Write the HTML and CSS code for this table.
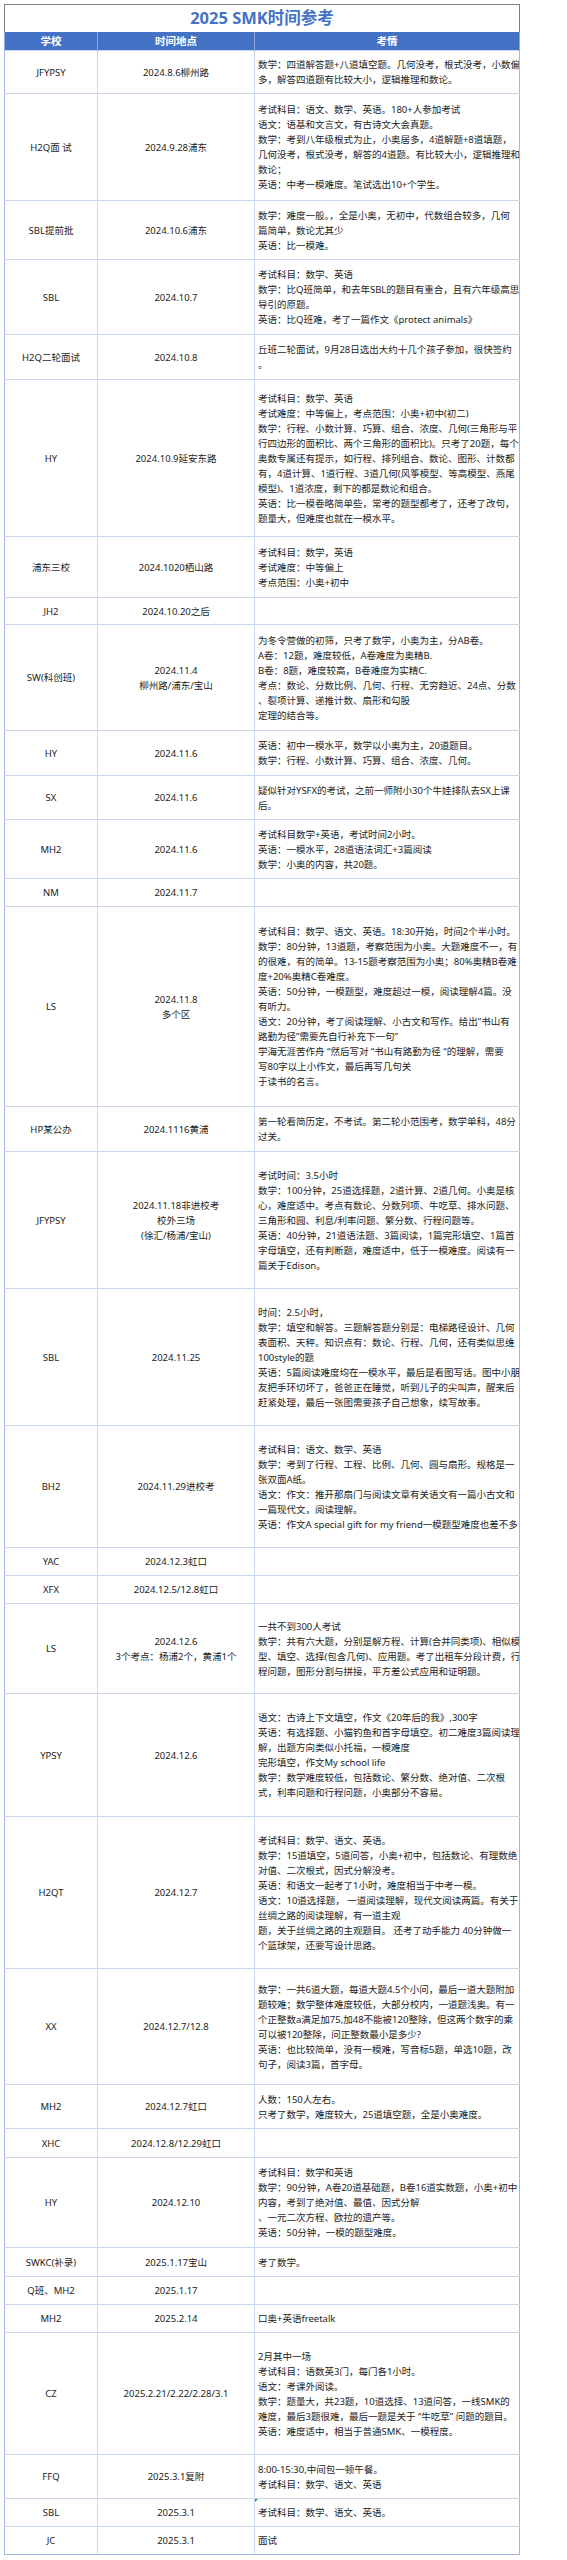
FILE: index.html
```html
<!DOCTYPE html>
<html lang="zh-CN">
<head>
<meta charset="utf-8">
<title>2025 SMK时间参考</title>
<link rel="stylesheet" href="styles.css">
</head>
<body>
<div class="page">
<table class="sheet">
<colgroup><col class="c1"><col class="c2"><col class="c3"></colgroup>
<thead>
<tr class="h27"><th class="title" colspan="3">2025 SMK时间参考</th></tr>
<tr class="h19"><th class="head">学校</th><th class="head">时间地点</th><th class="head">考情</th></tr>
</thead>
<tbody>
<tr class="h43"><td class="name">JFYPSY</td><td class="when">2024.8.6柳州路</td><td class="info">数学：四道解答题+八道填空题。几何没考，根式没考，小数偏<br>多，解答四道题有比较大小，逻辑推理和数论。</td></tr>
<tr class="h107"><td class="name">H2Q面 试</td><td class="when">2024.9.28浦东</td><td class="info">考试科目：语文、数学、英语。180+人参加考试<br>语文：语基和文言文，有古诗文大会真题。<br>数学：考到八年级根式为止，小奥居多，4道解题+8道填题，<br>几何没考，根式没考，解答的4道题。有比较大小，逻辑推理和<br>数论；<br>英语：中考一模难度。笔试选出10+个学生。</td></tr>
<tr class="h59"><td class="name">SBL提前批</td><td class="when">2024.10.6浦东</td><td class="info">数学：难度一般。，全是小奥，无初中，代数组合较多，几何<br>篇简单，数论尤其少<br>英语：比一模难。</td></tr>
<tr class="h75"><td class="name">SBL</td><td class="when">2024.10.7</td><td class="info">考试科目：数学、英语<br>数学：比Q班简单，和去年SBL的题目有重合，且有六年级高思<br>导引的原题。<br>英语：比Q班难，考了一篇作文《protect animals》</td></tr>
<tr class="h45"><td class="name">H2Q二轮面试</td><td class="when">2024.10.8</td><td class="info">丘班二轮面试，9月28日选出大约十几个孩子参加，很快签约<br>。</td></tr>
<tr class="h157"><td class="name">HY</td><td class="when">2024.10.9延安东路</td><td class="info">考试科目：数学、英语<br>考试难度：中等偏上，考点范围：小奥+初中(初二)<br>数学：行程、小数计算、巧算、组合、浓度、几何(三角形与平<br>行四边形的面积比、两个三角形的面积比)。只考了20题，每个<br>奥数专属还有提示，如行程、排列组合、数论、图形、计数都<br>有，4道计算、1道行程、3道几何(风筝模型、等高模型、燕尾<br>模型)、1道浓度，剩下的都是数论和组合。<br>英语：比一模卷略简单些，常考的题型都考了，还考了改句，<br>题量大，但难度也就在一模水平。</td></tr>
<tr class="h61"><td class="name">浦东三校</td><td class="when">2024.1020栖山路</td><td class="info">考试科目：数学，英语<br>考试难度：中等偏上<br>考点范围：小奥+初中</td></tr>
<tr class="h27"><td class="name">JH2</td><td class="when">2024.10.20之后</td><td class="info"></td></tr>
<tr class="h106"><td class="name">SW(科创班)</td><td class="when">2024.11.4<br>柳州路/浦东/宝山</td><td class="info">为冬令营做的初筛，只考了数学，小奥为主，分AB卷。<br>A卷：12题，难度较低，A卷难度为奥精B.<br>B卷：8题，难度较高，B卷难度为实精C.<br>考点：数论、分数比例、几何、行程、无穷趋近、24点、分数<br>、裂项计算、递推计数、扇形和勾股<br>定理的结合等。</td></tr>
<tr class="h45"><td class="name">HY</td><td class="when">2024.11.6</td><td class="info">英语：初中一模水平，数学以小奥为主，20道题目。<br>数学：行程、小数计算、巧算、组合、浓度、几何。</td></tr>
<tr class="h44"><td class="name">SX</td><td class="when">2024.11.6</td><td class="info">疑似针对YSFX的考试，之前一师附小30个牛娃排队去SX上课<br>后。</td></tr>
<tr class="h59"><td class="name">MH2</td><td class="when">2024.11.6</td><td class="info">考试科目数学+英语，考试时间2小时。<br>英语：一模水平，28道语法词汇+3篇阅读<br>数学：小奥的内容，共20题。</td></tr>
<tr class="h28"><td class="name">NM</td><td class="when">2024.11.7</td><td class="info"></td></tr>
<tr class="h200"><td class="name">LS</td><td class="when">2024.11.8<br>多个区</td><td class="info">考试科目：数学、语文、英语。18:30开始，时间2个半小时。<br>数学：80分钟，13道题，考察范围为小奥。大题难度不一，有<br>的很难，有的简单。13-15题考察范围为小奥；80%奥精B卷难<br>度+20%奥精C卷难度。<br>英语：50分钟，一模题型，难度超过一模，阅读理解4篇。没<br>有听力。<br>语文：20分钟，考了阅读理解、小古文和写作。给出”书山有<br>路勤为径”需要先自行补充下一句”<br>学海无涯苦作舟 “然后写对 “书山有路勤为径 “的理解，需要<br>写80字以上小作文，最后再写几句关<br>于读书的名言。</td></tr>
<tr class="h45"><td class="name">HP某公办</td><td class="when">2024.1116黄浦</td><td class="info">第一轮看简历定，不考试。第二轮小范围考，数学单科，48分<br>过关。</td></tr>
<tr class="h137"><td class="name">JFYPSY</td><td class="when">2024.11.18非进校考<br>校外三场<br>(徐汇/杨浦/宝山)</td><td class="info">考试时间：3.5小时<br>数学：100分钟，25道选择题，2道计算、2道几何。小奥是核<br>心，难度适中。考点有数论、分数列项、牛吃草、排水问题、<br>三角形和圆、利息/利率问题、繁分数、行程问题等。<br>英语：40分钟，21道语法题、3篇阅读，1篇完形填空、1篇首<br>字母填空，还有判断题，难度适中，低于一模难度。阅读有一<br>篇关于Edison。</td></tr>
<tr class="h137"><td class="name">SBL</td><td class="when">2024.11.25</td><td class="info">时间：2.5小时，<br>数学：填空和解答。三题解答题分别是：电梯路径设计、几何<br>表面积、天秤。知识点有：数论、行程、几何，还有类似思维<br>100style的题<br>英语：5篇阅读难度均在一模水平，最后是看图写话。图中小朋<br>友把手环切坏了，爸爸正在睡觉，听到儿子的尖叫声，醒来后<br>赶紧处理，最后一张图需要孩子自己想象，续写故事。</td></tr>
<tr class="h122"><td class="name">BH2</td><td class="when">2024.11.29进校考</td><td class="info">考试科目：语文、数学、英语<br>数学：考到了行程、工程、比例、几何、圆与扇形。规格是一<br>张双面A纸。<br>语文：作文：推开那扇门与阅读文章有关语文有一篇小古文和<br>一篇现代文，阅读理解。<br>英语：作文A special gift for my friend一模题型难度也差不多</td></tr>
<tr class="h28"><td class="name">YAC</td><td class="when">2024.12.3虹口</td><td class="info"></td></tr>
<tr class="h28"><td class="name">XFX</td><td class="when">2024.12.5/12.8虹口</td><td class="info"></td></tr>
<tr class="h90"><td class="name">LS</td><td class="when">2024.12.6<br>3个考点：杨浦2个，黄浦1个</td><td class="info">一共不到300人考试<br>数学：共有六大题，分别是解方程、计算(合并同类项)、相似模<br>型、填空、选择(包含几何)、应用题。考了出租车分段计费，行<br>程问题，图形分割与拼接，平方差公式应用和证明题。</td></tr>
<tr class="h123"><td class="name">YPSY</td><td class="when">2024.12.6</td><td class="info">语文：古诗上下文填空，作文《20年后的我》,300字<br>英语：有选择题、小猫钓鱼和首字母填空。初二难度3篇阅读理<br>解，出题方向类似小托福，一模难度<br>完形填空，作文My school life<br>数学：数学难度较低，包括数论、繁分数、绝对值、二次根<br>式，利率问题和行程问题，小奥部分不容易。</td></tr>
<tr class="h152"><td class="name">H2QT</td><td class="when">2024.12.7</td><td class="info">考试科目：数学、语文、英语。<br>数学：15道填空，5道问答，小奥+初中，包括数论、有理数绝<br>对值、二次根式，因式分解没考。<br>英语：和语文一起考了1小时，难度相当于中考一模。<br>语文：10道选择题， 一道阅读理解，现代文阅读两篇。有关于<br>丝绸之路的阅读理解，有一道主观<br>题，关于丝绸之路的主观题目。 还考了动手能力 40分钟做一<br>个篮球架，还要写设计思路。</td></tr>
<tr class="h116"><td class="name">XX</td><td class="when">2024.12.7/12.8</td><td class="info">数学：一共6道大题，每道大题4.5个小问，最后一道大题附加<br>题较难；数学整体难度较低，大部分校内，一道题浅奥。有一<br>个正整数a满足加75,加48不能被120整除，但这两个数字的乘<br>可以被120整除，问正整数最小是多少?<br>英语：也比较简单，没有一模难，写音标5题，单选10题，改<br>句子，阅读3篇，首字母。</td></tr>
<tr class="h44"><td class="name">MH2</td><td class="when">2024.12.7虹口</td><td class="info">人数：150人左右。<br>只考了数学，难度较大，25道填空题，全是小奥难度。</td></tr>
<tr class="h29"><td class="name">XHC</td><td class="when">2024.12.8/12.29虹口</td><td class="info"></td></tr>
<tr class="h90"><td class="name">HY</td><td class="when">2024.12.10</td><td class="info">考试科目：数学和英语<br>数学：90分钟，A卷20道基础题，B卷16道实数题，小奥+初中<br>内容，考到了绝对值、最值、因式分解<br>、一元二次方程、欧拉的遗产等。<br>英语：50分钟，一模的题型难度。</td></tr>
<tr class="h29"><td class="name">SWKC(补录)</td><td class="when">2025.1.17宝山</td><td class="info">考了数学。</td></tr>
<tr class="h28"><td class="name">Q班、MH2</td><td class="when">2025.1.17</td><td class="info"></td></tr>
<tr class="h28"><td class="name">MH2</td><td class="when">2025.2.14</td><td class="info">口奥+英语freetalk</td></tr>
<tr class="h122"><td class="name">CZ</td><td class="when">2025.2.21/2.22/2.28/3.1</td><td class="info">2月其中一场<br>考试科目：语数英3门，每门各1小时。<br>语文：考课外阅读。<br>数学：题量大，共23题，10道选择、13道问答，一线SMK的<br>难度，最后3题很难，最后一题是关于 “牛吃草” 问题的题目。<br>英语：难度适中，相当于普通SMK、一模程度。</td></tr>
<tr class="h44"><td class="name">FFQ</td><td class="when">2025.3.1复附</td><td class="info">8:00-15:30,中间包一顿午餐。<br>考试科目：数学、语文、英语</td></tr>
<tr class="h28"><td class="name">SBL</td><td class="when">2025.3.1</td><td class="info flag">考试科目：数学、语文、英语。</td></tr>
<tr class="h28"><td class="name">JC</td><td class="when">2025.3.1</td><td class="info">面试</td></tr>
</tbody>
</table>
</div>
</body>
</html>
```
FILE: styles.css
```css
html, body {
  margin: 0;
  padding: 0;
  background: #ffffff;
}

body {
  font-family: "Noto Sans", "Noto Sans CJK SC", sans-serif;
  color: #1c1c1c;
}

.page {
  padding: 4px 0 0 4px;
}

.sheet {
  border-collapse: collapse;
  table-layout: fixed;
  width: 515px;
}

.c1 { width: 93px; }
.c2 { width: 157px; }
.c3 { width: 265px; }

.title {
  border: 1px solid #7f7f7f;
  border-bottom: none;
  color: #4472c4;
  font-size: 16.5px;
  font-weight: 700;
  line-height: 20px;
  padding: 0;
  text-align: center;
  vertical-align: middle;
}

.head {
  background: #4472c4;
  color: #ffffff;
  font-size: 10.5px;
  font-weight: 700;
  line-height: 14px;
  padding: 0;
  text-align: center;
  vertical-align: middle;
  border-left: 1px solid #8ea9db;
  border-right: 1px solid #8ea9db;
}

td {
  border: 1px solid #c9d7f0;
  font-size: 9.5px;
  line-height: 15px;
  padding: 0 2px;
  vertical-align: middle;
}

tbody td:first-child { border-left-color: #9fb6e2; }
tbody td:last-child { border-right-color: #9fb6e2; }
tbody tr:last-child td { border-bottom-color: #9fb6e2; }

.name, .when {
  text-align: center;
}

.info {
  text-align: left;
  white-space: nowrap;
  overflow: hidden;
  padding-left: 3px;
  padding-right: 0;
}

.flag {
  position: relative;
}

.flag::before {
  content: "";
  position: absolute;
  left: 0;
  top: 0;
  border-top: 3px solid #1e9e3a;
  border-right: 3px solid transparent;
}

.h19 { height: 19px; }
.h27 { height: 27px; }
.h28 { height: 28px; }
.h29 { height: 29px; }
.h43 { height: 43px; }
.h44 { height: 44px; }
.h45 { height: 45px; }
.h59 { height: 59px; }
.h61 { height: 61px; }
.h75 { height: 75px; }
.h90 { height: 90px; }
.h106 { height: 106px; }
.h107 { height: 107px; }
.h116 { height: 116px; }
.h122 { height: 122px; }
.h123 { height: 123px; }
.h137 { height: 137px; }
.h152 { height: 152px; }
.h157 { height: 157px; }
.h200 { height: 200px; }
```
